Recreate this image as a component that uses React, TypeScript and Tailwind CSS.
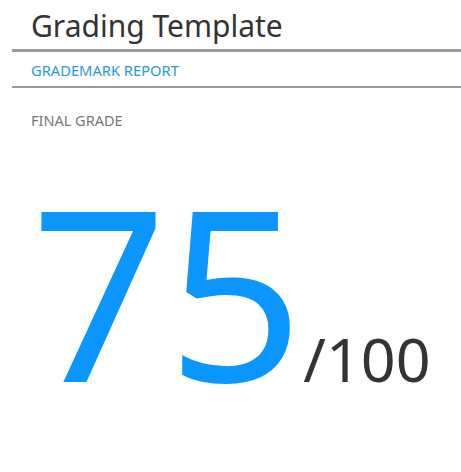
import React from "react";

export default function App() {
  return (
    <div className="min-h-screen bg-white font-['Noto_Sans',sans-serif]">
      <div className="ml-3">
        <h1 className="pl-[19px] pt-[7px] pb-[4px] text-[30px] leading-[38px] text-[#333333] border-b-[3px] border-[#9a9a9a]">
          Grading Template
        </h1>
        <div className="pl-[19px] pt-[8px] pb-[6px] text-[14.7px] leading-[20px] text-[#2d96e0] border-b-[2px] border-[#9a9a9a]">
          GRADEMARK REPORT
        </div>
        <div className="pl-[19px] mt-[22px] text-[14.5px] leading-[20px] text-[#777777]">
          FINAL GRADE
        </div>
        <div className="flex items-baseline pl-[19px] mt-[60px]">
          <span className="text-[238px] leading-[200px] text-[#0a95ff]">75</span>
          <span className="text-[61px] leading-none text-[#333333]">/100</span>
        </div>
      </div>
    </div>
  );
}
